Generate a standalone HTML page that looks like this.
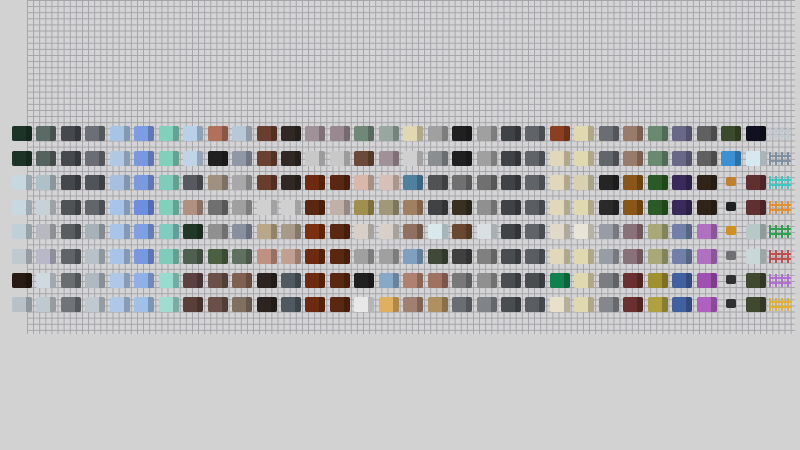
<!DOCTYPE html>
<html><head><meta charset="utf-8">
<style>
html,body{margin:0;padding:0;width:800px;height:450px;overflow:hidden;background:#d2d2d2;}
#grid{position:absolute;left:27px;top:0;width:768px;height:334px;background-color:#d4d4d6;
background-image:linear-gradient(to right,#a4a4a8 1px,transparent 1px),linear-gradient(to bottom,#a4a4a8 1px,transparent 1px);
background-size:6.11px 6.11px;}
.b{position:absolute;width:20px;height:15px;border-radius:2px;}
.b::after{content:"";position:absolute;right:0;top:0;width:6px;height:100%;background:rgba(0,0,0,.22);border-radius:0 2px 2px 0;}
.f{position:absolute;width:22px;height:13px;border-radius:0;}
</style></head><body>
<div id="grid"></div>
<div id="c"></div>
<script>
var C=[
["#1d3327","#1d3327","#c8d8e0","#c8d8e0","#c0d0d8","#c0c8d0","#2a1a14","#b8c0c8"],
["#5c6a66","#56625e","#b0c0c8","#c8d0d8","#b8b8c0","#b8b8c8","#d0d8e0","#c0c8d0"],
["#45484c","#46494d","#44474b","#505356","#5a5d60","#606468","#6a6d70","#707478"],
["#6c7076","#6a6e74","#505458","#62666a","#a8b0b8","#b8c0c8","#b0b8c0","#c0c8d0"],
["#a8c4e4","#b0c8e4","#a8c0e0","#a8c4e8","#a8c4e8","#a8c4e8","#b0c8e8","#b0c8e8"],
["#7c9ce4","#7898e0","#7a9ae0","#6e8ee0","#80a0e4","#7898e0","#90b0e8","#a0c0e8"],
["#80d0bc","#80d0bc","#80ccbc","#80d0bc","#80ccc0","#80ccbc","#98dcd0","#a0dcd0"],
["#b8d0e8","#c0d4e8","#585860","#b09080","#203828","#506050","#5a4040","#584038"],
["#b0705a","#202020","#a09080","#707070","#909090","#4a6040","#6a5048","#6a5048"],
["#b8c8d8","#9098a8","#a8a8a8","#a0a0a0","#8890a0","#607060","#806050","#807060"],
["#6a3e2c","#6a4030","#6a3c2c","#d0d0d0","#b8a888","#c09080","#2c2420","#2c2420"],
["#302824","#302824","#302824","#d0d0d0","#a89a88","#c0a090","#505860","#505860"],
["#a09098","#c8c8c8","#6e2a10","#5a2810","#7a3010","#6e2a10","#6e2a10","#6e2a10"],
["#988890","#c8c8c8","#5a2810","#c0b0a8","#5a2810","#5a2810","#5a2810","#5a2810"],
["#708878","#6a4a38","#d8b8a8","#a09050","#d8d0c8","#a0a0a0","#202020","#e8e8e8"],
["#98a8a0","#a09098","#d8c0b8","#a09878","#d8d0c8","#a0a0a0","#88a8c8","#e0b060"],
["#e0d8b0","#d0d0d0","#5080a0","#a08060","#907060","#80a0c0","#b08070","#a08070"],
["#a0a0a0","#8a8e90","#505254","#404244","#d8e8ec","#404838","#a07060","#b09060"],
["#202020","#202020","#707070","#383020","#6a4830","#404040","#787878","#6a6e72"],
["#a0a0a0","#a0a0a0","#707070","#909090","#d8e0e4","#808080","#909090","#808488"],
["#404346","#404346","#404346","#404346","#404346","#4a4d50","#4a4d50","#4a4d50"],
["#606468","#606468","#606468","#5a5e62","#606468","#5a5e62","#4a4d50","#5a5e62"],
["#8a4020","#e0d8b8","#e0d8b8","#e0d8b8","#e0d8c8","#e0d8b8","#108050","#e8e0c8"],
["#e0d8b0","#e0d8b0","#d8d0b0","#e0d8b0","#e8e4d8","#e0d8b0","#e0d8b0","#e0d8b0"],
["#6a6e72","#62666a","#252525","#2a2a2a","#989ca4","#989ca4","#7a7e82","#84888c"],
["#9a7a6a","#9a7a6a","#8a5518","#8a5518","#8a7078","#8a7078","#6a3030","#6a3030"],
["#6a8a70","#6a8a70","#2a5a25","#2a5a25","#a8a878","#a8a878","#a09030","#b0a040"],
["#6a6888","#6a6888","#3a2a5a","#3a2a5a","#7080a8","#7080a8","#4060a0","#4060a0"],
["#606060","#606060","#302418","#302418","#b070c0","#b070c0","#a050b0","#b060c0"],
["#3a4a2a","#3a90d0","#c08030","#202020","#d09020","#707070","#303030","#303030"],
["#101020","#d8e8f0","#603030","#603030","#b8c8c8","#c8d8d8","#404830","#404830"],
["#c0c8d0","#8090a0","#40c8c0","#e09030","#30a050","#c05050","#b070d0","#e0b030"]];
var ys=[133,158,182,207,231,256,280,304],h="";
for(var c=0;c<32;c++){var x=22+24.45*c;for(var r=0;r<8;r++){var col=C[c][r];
if(c==31){h+='<div class="f" style="left:'+(x-11)+'px;top:'+(ys[r]-6)+'px;background:repeating-linear-gradient(to right,'+col+' 0 2px,transparent 2px 6px),linear-gradient(to bottom,transparent 3px,'+col+' 3px 5px,transparent 5px 8px,'+col+' 8px 10px,transparent 10px)"></div>';}
else if(c==29&&r>=2){h+='<div style="position:absolute;left:'+(x-5)+'px;top:'+(ys[r]-5)+'px;width:10px;height:9px;background:'+col+';border-radius:2px"></div>';}
else{h+='<div class="b" style="left:'+(x-10)+'px;top:'+(ys[r]-7)+'px;background:'+col+'"></div>';}}}
document.getElementById("c").innerHTML=h;
</script>
</body></html>
